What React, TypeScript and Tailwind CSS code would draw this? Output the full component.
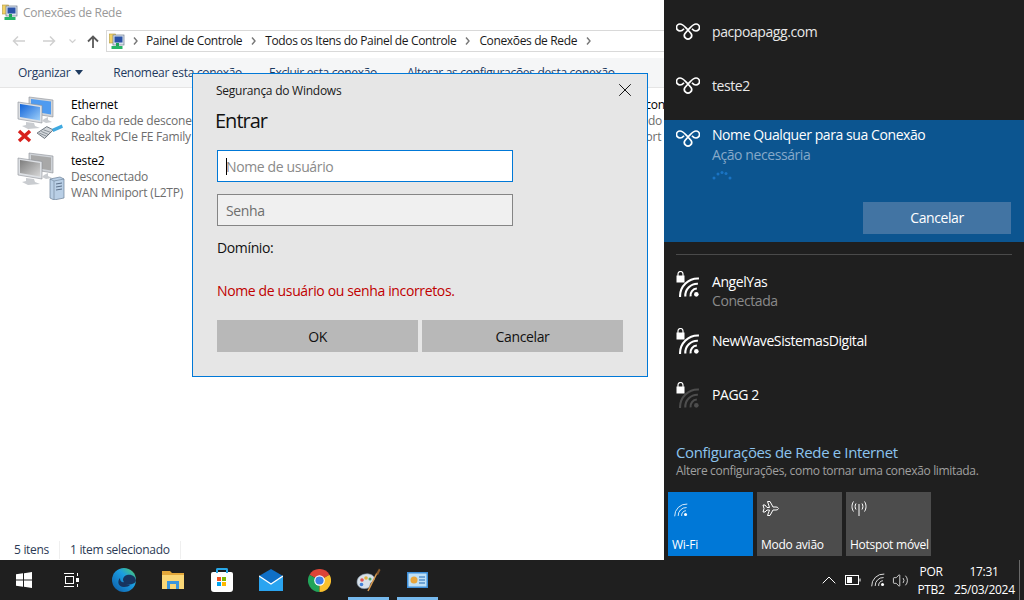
import { ChevronUp, Volume2, X } from "lucide-react";

const vpnRows = ["pacpoapagg.com", "teste2"];

function VpnIcon() {
  return (
    <svg width="24" height="18" viewBox="0 0 24 18" fill="none" stroke="white" strokeWidth="1.7" className="shrink-0">
      <path d="M8 5.8 C7 7 5.5 8 4 8 A3.5 3.5 0 0 1 4 1 C7 1 8 3 12 7 L15 10.5 A3.6 3.6 0 1 1 9 10.5 L12 7 C16 3 17 1 20 1 A3.5 3.5 0 0 1 20 8 C18.5 8 17 7 16 5.8" />
    </svg>
  );
}

function WifiArcs(props: { color: string; size: number; width: number }) {
  return (
    <svg width={props.size} height={props.size} viewBox="0 0 20 20" fill="none" stroke={props.color} strokeWidth={props.width} className="shrink-0">
      <circle cx="16.5" cy="16.5" r="2.2" fill={props.color} stroke="none" />
      <path d="M11 18.5 A6.5 6.5 0 0 1 17 11" />
      <path d="M6 18.5 A11.5 11.5 0 0 1 18 6.5" />
      <path d="M1 19 A17 17 0 0 1 19 1.5" />
    </svg>
  );
}

function WifiLock(props: { dim?: boolean }) {
  return (
    <div className="relative w-6 h-[27px] shrink-0">
      <svg width="9" height="12" viewBox="0 0 9 12" className="absolute left-0 top-0">
        <path d="M2 5 V3 a2.5 2.5 0 0 1 5 0 V5" fill="none" stroke="white" strokeWidth="1.2" />
        <rect x="0.5" y="4.5" width="8" height="7" fill="white" />
      </svg>
      <div className="absolute left-[3px] top-[6px]">
        <WifiArcs color={props.dim ? "#4d4d4d" : "white"} size={21} width={2} />
      </div>
    </div>
  );
}

function ControlPanelIcon() {
  return (
    <svg width="16" height="17" viewBox="0 0 16 17" className="shrink-0">
      <rect x="0.5" y="1" width="6" height="9" fill="#f2d265" stroke="#b59a3a" strokeWidth="0.6" />
      <rect x="4" y="2" width="11" height="10" fill="#dbe4ee" stroke="#6d7a8c" strokeWidth="0.7" />
      <rect x="5.5" y="3.5" width="8" height="6" fill="#2a52a8" />
      <rect x="7" y="10" width="3" height="3" fill="#22a35a" />
      <rect x="2.5" y="13" width="11" height="3" fill="#27b566" />
    </svg>
  );
}

function Monitors(props: { gray?: boolean }) {
  const screenA = props.gray ? "#a8a8a8" : "#4f9bf0";
  const screenB = props.gray ? "#7d7d7d" : "#0f62d8";
  const id = props.gray ? "g" : "b";
  return (
    <svg width="40" height="36" viewBox="0 0 40 36" className="shrink-0">
      <defs>
        <linearGradient id={id} x1="0" y1="0" x2="1" y2="1">
          <stop offset="0" stopColor={screenB} />
          <stop offset="1" stopColor={props.gray ? "#d6d6d6" : "#9fd0fa"} />
        </linearGradient>
      </defs>
      <path d="M13 1 L37 4 L37 21 L13 17 Z" fill="#cfd3d8" stroke="#8b8f96" strokeWidth="0.6" />
      <path d="M15 3 L35 5.5 L35 18.5 L15 15 Z" fill={screenA} />
      <path d="M2 6 L26 9.5 L26 27 L2 23 Z" fill="#dde0e4" stroke="#8b8f96" strokeWidth="0.6" />
      <path d="M4 8 L24 11 L24 24.5 L4 21 Z" fill={`url(#${id})`} />
      <path d="M10 26 L18 27 L19 30 L24 32 L12 33 L6 30 L10 29 Z" fill="#c9ccd0" />
      <path d="M32 21 L32 24 L36 26 L30 27 L26 25 L28 23 Z" fill="#c9ccd0" />
    </svg>
  );
}

function EthernetIcon() {
  return (
    <div className="relative w-[48px] h-[46px] shrink-0">
      <Monitors />
      <svg width="15" height="14" viewBox="0 0 15 14" className="absolute left-[1px] top-[33px]">
        <path d="M2 2 L13 12 M13 2 L2 12" stroke="#d8201c" strokeWidth="3.4" />
      </svg>
      <svg width="28" height="18" viewBox="0 0 26 16" className="absolute left-[20px] top-[27px]">
        <path d="M1 9 L10 3 L16 6 L8 14 Z" fill="#d4d8dc" stroke="#5d6670" strokeWidth="0.8" />
        <path d="M3 9 L10 12 M5 7.5 L12 10.5 M7 6 L14 8.5" stroke="#5d6670" strokeWidth="0.6" />
        <path d="M15 5 L24 1 L25 4 L16 8 Z" fill="#3fa9e0" />
      </svg>
    </div>
  );
}

function TunnelIcon() {
  return (
    <div className="relative w-[48px] h-[48px] shrink-0">
      <Monitors gray />
      <svg width="16" height="24" viewBox="0 0 16 24" className="absolute left-[33px] top-[24px]">
        <path d="M1 3 L11 1 L15 3 L15 22 L5 24 L1 22 Z" fill="#b9cfe6" stroke="#6b7f96" strokeWidth="0.7" />
        <path d="M5 5 L15 3 M5 5 L5 24 M1 3 L5 5" stroke="#6b7f96" strokeWidth="0.6" fill="none" />
        <path d="M7 8 L13 7 M7 11 L13 10 M7 14 L13 13" stroke="#5c7089" strokeWidth="1" />
      </svg>
    </div>
  );
}

function NetworkItem(props: { icon: React.ReactNode; lines: string[] }) {
  return (
    <div className="flex h-[56px] gap-[7px] whitespace-nowrap">
      {props.icon}
      <div className="text-[12px] leading-[16px] text-[#6d6d6d] pt-[1px] tracking-[-0.2px]">
        <div className="text-black">{props.lines[0]}</div>
        <div>{props.lines[1]}</div>
        <div>{props.lines[2]}</div>
      </div>
    </div>
  );
}

function Crumb(props: { label?: string }) {
  return (
    <>
      {props.label && <span className="text-[12px] text-[#1a1a1a] tracking-[-0.36px]">{props.label}</span>}
      <svg width="5" height="8" viewBox="0 0 5 8" className={`shrink-0 ${props.label ? "mx-[9px]" : "mx-[8px]"}`}>
        <path d="M1 0.5 L4 4 L1 7.5" fill="none" stroke="#777" strokeWidth="1.4" />
      </svg>
    </>
  );
}

function Explorer() {
  return (
    <div className="relative w-[664px] h-full bg-white flex flex-col overflow-hidden tracking-[-0.3px]">
      <div className="h-[24px] flex items-center pl-[2px] pt-[1px] gap-[5px] text-[12px] text-[#999]">
        <ControlPanelIcon />
        <span>Conexões de Rede</span>
      </div>
      <div className="h-[34px] flex items-center">
        <div className="w-[106px] flex items-center pl-[12px] shrink-0">
          <svg width="14" height="12" viewBox="0 0 14 12" fill="none" stroke="#d0d0d0" strokeWidth="1.5">
            <path d="M13 6 H1.5 M6 1.5 L1.5 6 L6 10.5" />
          </svg>
          <svg width="14" height="12" viewBox="0 0 14 12" fill="none" stroke="#d0d0d0" strokeWidth="1.5" className="ml-[16px]">
            <path d="M1 6 H12.5 M8 1.5 L12.5 6 L8 10.5" />
          </svg>
          <svg width="7" height="5" viewBox="0 0 7 5" fill="none" stroke="#d0d0d0" strokeWidth="1.2" className="ml-[13px]">
            <path d="M0.5 0.5 L3.5 3.5 L6.5 0.5" />
          </svg>
          <svg width="12" height="13" viewBox="0 0 12 13" fill="none" stroke="#5a5a5a" strokeWidth="1.8" className="ml-[11px]">
            <path d="M6 13 V1.5 M1 6.5 L6 1.5 L11 6.5" />
          </svg>
        </div>
        <div className="flex-1 h-[22px] border-y border-[#d9d9d9] border-l flex items-center pl-[2px] overflow-hidden whitespace-nowrap">
          <ControlPanelIcon />
          <Crumb />
          <Crumb label="Painel de Controle" />
          <Crumb label="Todos os Itens do Painel de Controle" />
          <Crumb label="Conexões de Rede" />
        </div>
      </div>
      <div className="h-[30px] bg-[#f5f6f7] border-b border-[#e5e5e5] flex items-center text-[12px] text-[#1e3a5f] whitespace-nowrap">
        <span className="ml-[18px] flex items-center gap-[5px]">
          Organizar
          <span className="w-0 h-0 border-x-[4px] border-x-transparent border-t-[5px] border-t-[#1e3a5f]" />
        </span>
        <span className="ml-[30px]">Renomear esta conexão</span>
        <span className="ml-[27px]">Excluir esta conexão</span>
        <span className="ml-[30px]">Alterar as configurações desta conexão</span>
      </div>
      <div className="flex-1 flex pt-[8px] pl-[16px] overflow-hidden">
        <div className="w-[257px] shrink-0">
          <NetworkItem icon={<EthernetIcon />} lines={["Ethernet", "Cabo da rede desconectado", "Realtek PCIe FE Family Controller"]} />
          <NetworkItem icon={<TunnelIcon />} lines={["teste2", "Desconectado", "WAN Miniport (L2TP)"]} />
        </div>
        <div className="w-[257px] shrink-0" />
        <div className="w-[200px] shrink-0">
          <NetworkItem icon={<div className="w-[48px]" />} lines={["Conexão 2 con", "Desconectado", "WAN Miniport (L2TP)"]} />
        </div>
      </div>
      <div className="h-[20px] flex items-center text-[12px] text-[#2b3a55] whitespace-nowrap">
        <span className="pl-[14px] pr-[10px] border-r border-[#efefef]">5 itens</span>
        <span className="pl-[10px] pr-[10px] border-r border-[#efefef]">1 item selecionado</span>
      </div>
    </div>
  );
}

function LoginDialog() {
  return (
    <div className="absolute left-[192px] top-[73px] w-[456px] h-[304px] bg-[#e6e6e6] border border-[#0078d7] pl-[23px] pr-[24px] tracking-[-0.36px]">
      <div className="flex items-center justify-between h-[31px] text-[12px] text-[#1a1a1a] pt-[1px] tracking-[-0.25px]">
        <span className="pt-[1px]">Segurança do Windows</span>
        <X size={22} strokeWidth={1} className="text-black -mr-[13px] shrink-0" />
      </div>
      <div className="text-[20px] leading-[30px] text-[#111] mt-[1px] -ml-px tracking-[-1px]">Entrar</div>
      <div className="relative mt-[14px] ml-[1px] w-[296px] h-[32px] bg-white border border-[#0078d7] flex items-center pl-[8px] pt-[1px] text-[14px] text-[#8a8a8a]">
        <span className="absolute left-[8px] top-[7px] w-px h-[17px] bg-black" />
        Nome de usuário
      </div>
      <div className="mt-[12px] ml-[1px] w-[296px] h-[32px] bg-[#f0f0f0] border border-[#858585] flex items-center pl-[8px] pt-[1px] text-[14px] text-[#6e6e6e]">
        Senha
      </div>
      <div className="mt-[12px] ml-[1px] text-[14px] leading-[20px] text-[#111]">Domínio:</div>
      <div className="mt-[23px] ml-[1px] text-[14px] leading-[20px] text-[#c00000]">Nome de usuário ou senha incorretos.</div>
      <div className="mt-[19px] ml-[1px] flex gap-[4px] w-[406px]">
        <div className="w-[201px] h-[32px] bg-[#b8b8b8] flex items-center justify-center text-[14px] text-[#111]">OK</div>
        <div className="w-[201px] h-[32px] bg-[#b8b8b8] flex items-center justify-center text-[14px] text-[#111]">Cancelar</div>
      </div>
    </div>
  );
}

function Tile(props: { label: string; active?: boolean; icon: React.ReactNode }) {
  return (
    <div className={`w-[85px] h-[64px] flex flex-col justify-between pl-[4px] pt-[8px] text-[12px] tracking-[-0.25px] text-white whitespace-nowrap overflow-hidden ${props.active ? "bg-[#0078d7]" : "bg-[#4c4c4c]"}`}>
      <div className="h-[18px] pl-[1px]">{props.icon}</div>
      <span className="leading-[20px] pb-[1px]">{props.label}</span>
    </div>
  );
}

function Flyout() {
  return (
    <div className="w-[360px] h-full bg-[#1f1f1f] flex flex-col pt-[5px] text-[14px] tracking-[-0.42px] text-white whitespace-nowrap">
      {vpnRows.map((name) => (
        <div key={name} className="h-[54px] flex items-center pl-[12px] gap-[12px] shrink-0">
          <VpnIcon />
          <span className="text-[#e8e8e8] pb-[1px]">{name}</span>
        </div>
      ))}
      <div className="mt-[7px] h-[122px] bg-[#0c5590] pl-[12px] pt-[5px] shrink-0">
        <div className="flex gap-[12px]">
          <div className="pt-[5px]">
            <VpnIcon />
          </div>
          <div className="leading-[20px]">
            <div>Nome Qualquer para sua Conexão</div>
            <div className="text-[#86a9c9]">Ação necessária</div>
            <svg width="20" height="10" viewBox="0 0 20 10" className="mt-[5px]" fill="#1a74c4">
              <circle cx="2" cy="8" r="1.5" />
              <circle cx="6" cy="4" r="1.5" />
              <circle cx="10" cy="2.5" r="1.5" />
              <circle cx="14" cy="3.5" r="1.5" />
              <circle cx="18" cy="8" r="1.5" />
            </svg>
          </div>
        </div>
        <div className="ml-[187px] mt-[22px] w-[148px] h-[32px] bg-[#4274a3] flex items-center justify-center pb-[1px]">Cancelar</div>
      </div>
      <div className="mx-[12px] mt-[12px] h-px bg-[#4a4a4a] shrink-0" />
      <div className="h-[59px] flex items-center pl-[12px] gap-[12px] shrink-0">
        <WifiLock />
        <div className="leading-[19px] pt-[13px]">
          <div>AngelYas</div>
          <div className="text-[#8a8a8a]">Conectada</div>
        </div>
      </div>
      <div className="h-[54px] flex items-center pl-[12px] gap-[12px] shrink-0">
        <WifiLock />
        <span className="pb-[2px]">NewWaveSistemasDigital</span>
      </div>
      <div className="h-[54px] flex items-center pl-[12px] gap-[12px] shrink-0">
        <WifiLock dim />
        <span className="pb-[2px]">PAGG 2</span>
      </div>
      <div className="mt-[19px] pl-[12px] text-[15px] leading-[22px] tracking-[-0.36px] text-[#8cc4ee]">Configurações de Rede e Internet</div>
      <div className="pl-[12px] text-[12px] leading-[18px] mt-[-1px] tracking-[-0.33px] text-[#a0a0a0]">Altere configurações, como tornar uma conexão limitada.</div>
      <div className="flex gap-[4px] pl-[4px] mt-[12px]">
        <Tile label="Wi-Fi" active icon={<div className="pt-[3px] pl-[1px]"><WifiArcs color="white" size={14} width={1.2} /></div>} />
        <Tile
          label="Modo avião"
          icon={
            <svg width="17" height="17" viewBox="0 0 17 17" fill="none" stroke="white" strokeWidth="1">
              <path d="M1 5 L3 5 L5 7.5 L7.5 7.5 L5.5 1.5 L8 1.5 L11 7 L14 7 C16 7 16.5 8.5 16.5 8.5 C16.5 8.5 16 10 14 10 L11 10 L8 15.5 L5.5 15.5 L7.5 10 L5 10 L3 12 L1 12 L2 8.5 Z" />
            </svg>
          }
        />
        <Tile
          label="Hotspot móvel"
          icon={
            <svg width="16" height="17" viewBox="0 0 16 17" fill="none" stroke="white" strokeWidth="1">
              <path d="M8 4 V16" />
              <path d="M5 3.5 C3.8 5.5 3.8 7.5 5 9.5 M11 3.5 C12.2 5.5 12.2 7.5 11 9.5" />
              <path d="M2.5 1.5 C0.5 4.5 0.5 8.5 2.5 11.5 M13.5 1.5 C15.5 4.5 15.5 8.5 13.5 11.5" />
            </svg>
          }
        />
      </div>
    </div>
  );
}

function AppSlot(props: { active?: boolean; children: React.ReactNode }) {
  return (
    <div className="relative w-[49px] h-full flex items-center justify-center shrink-0">
      {props.children}
      {props.active && <span className="absolute bottom-0 left-[4px] w-[41px] h-[3px] bg-[#76b9ed]" />}
    </div>
  );
}

function Taskbar() {
  return (
    <div className="h-[40px] bg-[#1f1f1f] flex items-center text-white text-[12px] whitespace-nowrap shrink-0">
      <div className="w-[48px] flex justify-center shrink-0">
        <svg width="16" height="16" viewBox="0 0 16 16" fill="white">
          <path d="M0 2.3 L7 1.3 V7.5 H0 Z M8 1.2 L16 0 V7.5 H8 Z M0 8.5 H7 V14.7 L0 13.7 Z M8 8.5 H16 V16 L8 14.8 Z" />
        </svg>
      </div>
      <div className="w-[48px] flex justify-center mr-[3px] shrink-0">
        <svg width="16" height="14" viewBox="0 0 16 14" fill="none" stroke="white" strokeWidth="1">
          <path d="M0 0.5 H10 M0 13.5 H10" />
          <rect x="1.5" y="3.5" width="8" height="7" />
          <path d="M13.5 0 V3 M13.5 11 V14" />
          <rect x="12" y="5" width="3" height="4" fill="white" stroke="none" />
        </svg>
      </div>
      <AppSlot>
        <svg width="24" height="24" viewBox="0 0 24 24">
          <defs>
            <linearGradient id="edge" x1="0" y1="1" x2="1" y2="0">
              <stop offset="0" stopColor="#0c59a4" />
              <stop offset="0.6" stopColor="#1b9de2" />
              <stop offset="1" stopColor="#54d05f" />
            </linearGradient>
          </defs>
          <circle cx="12" cy="12" r="12" fill="url(#edge)" />
          <path d="M24 13 C24 9 20 6 15 7 C11 8 10 12 12 14 C9 15 8 12 8 10 C5 13 6 19 12 19 C15 19 17 18 18 17 L14 16 C18 17 23 16 24 13 Z" fill="#17345f" />
        </svg>
      </AppSlot>
      <AppSlot>
        <svg width="22" height="18" viewBox="0 0 22 18">
          <path d="M0 0 H8 L10 2 H22 V18 H0 Z" fill="#e2a73a" />
          <path d="M0 4 H22 V18 H0 Z" fill="#f9d676" />
          <path d="M5 10 H17 V18 H14 V13 H8 V18 H5 Z" fill="#3a96dd" />
        </svg>
      </AppSlot>
      <AppSlot>
        <div className="relative w-[22px] h-[20px] bg-white rounded-b-[3px] rounded-t-[2px] mt-[3px] grid grid-cols-2 gap-px content-center justify-center">
          <span className="absolute -top-[4px] left-[5px] w-[12px] h-[5px] border-2 border-b-0 border-[#29a8e8] rounded-t-[2px]" />
          <span className="w-[4px] h-[4px] bg-[#f25022] justify-self-end" />
          <span className="w-[4px] h-[4px] bg-[#7fba00]" />
          <span className="w-[4px] h-[4px] bg-[#00a4ef] justify-self-end" />
          <span className="w-[4px] h-[4px] bg-[#ffb900]" />
        </div>
      </AppSlot>
      <AppSlot>
        <svg width="24" height="22" viewBox="0 0 24 22">
          <path d="M0 7 L12 0 L24 7 V22 H0 Z" fill="#0f6fc6" />
          <path d="M0 7 L12 15 L24 7 V22 H0 Z" fill="#2aa4f0" />
          <path d="M0 7 L12 15 L24 7" fill="none" stroke="white" strokeWidth="1.4" />
        </svg>
      </AppSlot>
      <AppSlot>
        <svg width="23" height="23" viewBox="0 0 24 24">
          <path d="M12 12 L22.4 6 A12 12 0 0 0 1.6 6 Z" fill="#dc4437" />
          <path d="M12 12 L1.6 6 A12 12 0 0 0 12 24 Z" fill="#21a45a" />
          <path d="M12 12 L12 24 A12 12 0 0 0 22.4 6 Z" fill="#fbc02d" />
          <circle cx="12" cy="12" r="5.5" fill="white" />
          <circle cx="12" cy="12" r="4.3" fill="#3f7fe8" />
        </svg>
      </AppSlot>
      <AppSlot active>
        <svg width="25" height="24" viewBox="0 0 25 24">
          <path d="M1 14 C1 8 8 5 13 6 C19 7 20 12 16 14 C13 15 15 19 12 20 C6 22 1 19 1 14 Z" fill="#d7e0e8" stroke="#8294a6" strokeWidth="0.6" />
          <circle cx="6" cy="12" r="1.8" fill="#e05050" />
          <circle cx="10" cy="10" r="1.8" fill="#e0b040" />
          <circle cx="14" cy="11" r="1.5" fill="#50a860" />
          <circle cx="5.5" cy="16.5" r="1.8" fill="#4080d8" />
          <path d="M12 23 L21 5" stroke="#d89a50" strokeWidth="1.6" />
          <path d="M20 6 L23 0.5 L24.5 2 L22 7 Z" fill="#8a5a2a" />
        </svg>
      </AppSlot>
      <AppSlot active>
        <svg width="21" height="16" viewBox="0 0 21 16">
          <rect width="21" height="16" fill="#3d8fd9" />
          <rect x="1.5" y="1.5" width="18" height="13" fill="#bfe0f5" />
          <circle cx="7" cy="8" r="3.5" fill="#e8a53a" />
          <path d="M12 5 H18 M12 8 H18 M12 11 H18" stroke="#2268b5" strokeWidth="1.2" />
        </svg>
      </AppSlot>
      <div className="ml-auto flex items-center h-full shrink-0 tracking-[-0.3px]">
        <ChevronUp size={24} strokeWidth={1} className="mr-[4px]" />
        <svg width="16" height="10" viewBox="0 0 16 10" fill="none" stroke="white" strokeWidth="1" className="mr-[10px]">
          <rect x="0.5" y="0.5" width="13" height="9" />
          <rect x="2" y="2" width="5" height="6" fill="white" stroke="none" />
          <path d="M15 3.5 V6.5" />
        </svg>
        <WifiArcs color="white" size={14} width={1.2} />
        <Volume2 size={17} strokeWidth={1.1} className="ml-[7px] mr-[3px]" />
        <div className="w-[38px] text-center leading-[18px] text-[12px] pt-[1px]">
          <div>POR</div>
          <div>PTB2</div>
        </div>
        <div className="w-[60px] ml-[4px] text-center leading-[18px] text-[12px] pt-[1px]">
          <div>17:31</div>
          <div>25/03/2024</div>
        </div>
        <span className="ml-[5px] mr-[4px] w-px h-full bg-[#6a6a6a]" />
      </div>
    </div>
  );
}

export default function App() {
  return (
    <div className="relative w-[1024px] h-[600px] overflow-hidden flex flex-col font-['Open_Sans','Noto_Sans',sans-serif]">
      <div className="relative flex-1 flex min-h-0">
        <Explorer />
        <LoginDialog />
        <Flyout />
      </div>
      <Taskbar />
    </div>
  );
}
